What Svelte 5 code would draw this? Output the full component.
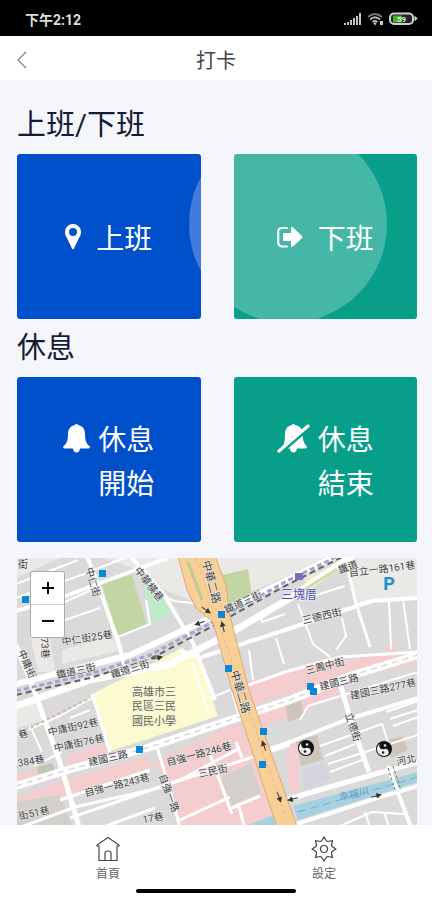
<script>
    let zoom = 16

    // blocks drawn below the roads
    let areas = [
        { kind: "pale", points: "16,558 60,558 16,578" },
        { kind: "pale", points: "102,558 178,558 190,600 165,590 140,570" },
        { kind: "pale", points: "215,558 330,558 250,592 228,600" },
        { kind: "pale", points: "345,558 418,558 418,598 375,602 355,604" },
        { kind: "pale", points: "62,650 110,636 122,650 62,664" },
        { kind: "pale", points: "30,635 50,635 55,672 38,672" },
        { kind: "pale", points: "16,702 34,697 44,720 16,728" },
        { kind: "cream", points: "304,578 332,566 334,572 308,590" },
        { kind: "park", points: "102,583 132,575 147,625 117,637" },
        { kind: "park", points: "222,575 248,569 252,596 228,603" },
        { kind: "mint", points: "142,580 164,597 170,615 153,623" },
        { kind: "school", points: "92,694 182,648 198,658 218,716 108,752" },
        { kind: "pink", points: "16,775 34,769 40,780 16,787" },
        { kind: "olive", points: "36,767 52,763 56,773 40,778" },
        { kind: "pink", points: "66,756 104,743 108,756 70,768" },
        { kind: "pink", points: "16,797 64,780 148,756 152,768 62,797 16,808" },
        { kind: "pink", points: "155,760 240,722 281,825 182,825" },
        { kind: "block", points: "221,778 251,763 261,793 231,805" },
        { kind: "block", points: "16,802 60,795 72,825 16,825" },
        { kind: "pink", points: "246,682 310,664 418,650 418,664 330,682 253,705" },
        { kind: "pink", points: "253,708 332,684 340,694 262,728" },
        { kind: "pink", points: "285,745 297,742 299,790 290,792" },
        { kind: "pink", points: "385,646 394,641 396,649 386,652" },
        { kind: "beige", points: "296,741 317,735 323,760 301,766" },
        { kind: "beige", points: "387,740 402,736 408,750 391,758" },
        { kind: "beige", points: "285,699 300,695 304,716 288,722" },
        { kind: "lilac", points: "302,771 325,763 330,780 304,790" },
        { kind: "river", points: "293,806 418,772 418,782 298,820" },
        { kind: "river", points: "248,825 280,813 286,825" }
    ]

    let streets = [
        { size: 2, d: "M16 598 L84 574 L220 520 M16 584 L78 560 M60 604 L98 587 M62 621 L100 608" },
        { size: 4, d: "M16 611 L60 598 L146 566 L168 558" },
        { size: 4, d: "M87 556 L100 590 L120 647 L125 668" },
        { size: 4, d: "M130 556 L163 593 L193 643 L215 700" },
        { size: 2, d: "M165 596 C175 605 190 600 200 605 M118 637 L150 624 L146 600" },
        { size: 5, d: "M16 645 L34 690 L60 763 L80 830" },
        { size: 7, d: "M16 706 L90 680 L170 664 L225 636 L292 597 L352 556" },
        { size: 6, d: "M16 684 L130 655 L210 618 L336 556" },
        { size: 2, d: "M16 735 L60 716 L92 698 M30 726 L42 752 M34 766 L62 752 M70 718 L90 710" },
        { size: 3, d: "M92 694 L110 752 M178 650 L202 658" },
        { size: 8, d: "M16 786 L64 771 L150 747 L290 700 L350 676 L418 655" },
        { size: 3, d: "M16 829 L75 807 L150 790 L290 745" },
        { size: 3, d: "M60 800 L150 770 M70 818 L180 780 L240 748 M90 832 L155 808 M180 820 L230 797" },
        { size: 3, d: "M157 747 L170 790 L180 828 M210 754 L232 814 M236 742 L242 758 M232 808 L260 796 M238 803 L244 825" },
        { size: 2, d: "M192 662 L208 712 M210 698 L230 690 M240 720 L232 692" },
        { size: 4, d: "M202 657 L285 630 L372 601 L418 598" },
        { size: 3, d: "M246 686 L285 672 L340 657 L418 652" },
        { size: 3, d: "M345 556 L355 600 L370 647" },
        { size: 2, d: "M298 604 L313 644 L330 657 M342 618 L346 636 L336 650 M389 600 L391 649 M403 600 L410 649" },
        { size: 2, d: "M249 650 L253 680 M276 638 L284 664 M300 600 L345 586 M260 612 L262 622 L285 614" },
        { size: 5, d: "M340 683 L352 725 L369 772" },
        { size: 4, d: "M262 752 L290 742 L348 719 L418 698" },
        { size: 2, d: "M320 746 L382 724 L390 748 M325 756 L355 744 M328 764 L418 735 M330 772 L362 760 M300 720 L308 706 L418 672" },
        { size: 2, d: "M386 712 L418 701 M390 719 L418 710 M393 726 L418 717" },
        { size: 5, d: "M285 800 L340 784 L418 762" },
        { size: 4, d: "M297 824 L380 797 L418 786" },
        { size: 4, d: "M388 766 L412 830" },
        { size: 2, d: "M340 826 L372 812 L404 814 M365 812 L371 830 M384 812 L390 830" }
    ]

    let labels = [
        { text: "街", x: 23, y: 564, turn: 0 },
        { text: "自立一路161巷", x: 382, y: 569, turn: -7 },
        { text: "鐵道三街", x: 243, y: 602, turn: -25 },
        { text: "鐵道", x: 348, y: 567, turn: -20 },
        { text: "三德西街", x: 322, y: 616, turn: -13 },
        { text: "三鳳中街", x: 325, y: 666, turn: -14 },
        { text: "建國三路", x: 339, y: 682, turn: -14 },
        { text: "建國三路277巷", x: 383, y: 689, turn: -12 },
        { text: "中仁街", x: 93, y: 582, turn: 74 },
        { text: "中仁街25巷", x: 87, y: 638, turn: -9 },
        { text: "73巷", x: 45, y: 648, turn: 86 },
        { text: "中庸街", x: 27, y: 664, turn: 66 },
        { text: "鐵道三街", x: 76, y: 671, turn: -12 },
        { text: "鐵道三街", x: 130, y: 669, turn: -17 },
        { text: "中華橫巷", x: 149, y: 584, turn: 52 },
        { text: "中華二路", x: 211, y: 582, turn: 75, big: true },
        { text: "中華二路", x: 240, y: 692, turn: 74, big: true },
        { text: "中庸街92巷", x: 73, y: 727, turn: -12 },
        { text: "中庸街76巷", x: 79, y: 743, turn: -12 },
        { text: "建國三路", x: 108, y: 758, turn: -13 },
        { text: "自強一路243巷", x: 117, y: 785, turn: -14 },
        { text: "自強一路246巷", x: 199, y: 754, turn: -15 },
        { text: "三民街", x: 213, y: 771, turn: -12 },
        { text: "自強一路", x: 169, y: 793, turn: 70 },
        { text: "384巷", x: 31, y: 761, turn: -10 },
        { text: "巷", x: 23, y: 734, turn: -10 },
        { text: "街51巷", x: 34, y: 813, turn: -12 },
        { text: "17巷", x: 153, y: 818, turn: -10 },
        { text: "立德街", x: 353, y: 727, turn: 72 },
        { text: "河北", x: 406, y: 760, turn: -12 },
        { text: "三塊厝", x: 299, y: 595, turn: 0, kind: "station" },
        { text: "幸福川", x: 354, y: 794, turn: -13, kind: "water" },
        { text: "高雄市三", x: 154, y: 692, turn: 0, kind: "campus" },
        { text: "民區三民", x: 154, y: 706, turn: 0, kind: "campus" },
        { text: "國民小學", x: 154, y: 721, turn: 0, kind: "campus" }
    ]

    let stops = [
        [102, 573], [25, 599], [221, 614], [228, 668], [310, 686],
        [313, 691], [139, 749], [263, 731], [262, 764]
    ]

    let temples = [[306, 748], [384, 749]]

    let arrows = [
        { x: 206, y: 610, turn: 35 },
        { x: 200, y: 623, turn: 160 },
        { x: 223, y: 627, turn: 255 },
        { x: 157, y: 658, turn: -12 },
        { x: 264, y: 746, turn: 250 },
        { x: 279, y: 797, turn: 70 },
        { x: 376, y: 796, turn: -14 },
        { x: 293, y: 799, turn: 165 }
    ]
</script>

<div class="page">
    <div class="status">
        <span>下午2:12</span>
        <svg width="74" height="14" viewBox="0 0 74 14" aria-hidden="true">
            <path d="M1 13v-2M4 13v-3M7 13V8M10 13V6M13 13V4M16 13V1" stroke="#c4c4c4" stroke-width="2" />
            <g fill="none" stroke="#bbb" stroke-width="1.7">
                <path d="M24 5Q31-1 38 5" stroke="#777" />
                <path d="M26 7.500Q31 3 36 7.500M28.500 10Q31 7.500 33.500 10" />
            </g>
            <path d="M29 10.500h4l-2 3zM36 9h3v4h-3z" fill="#ccc" />
            <rect x="46" y="1.500" width="23" height="10.500" rx="4" fill="#222" stroke="#d0d0d0" stroke-width="2" />
            <path d="M71 4.500l2 2-2 2z" fill="#ddd" stroke="#ddd" />
            <path d="M49 3.500h9v7h-9z" fill="#45b51f" />
            <text x="53" y="10" font-size="8" font-weight="700" fill="#dff2d4">59</text>
        </svg>
    </div>

    <header>
        <button class="back" aria-label="返回">
            <svg width="10" height="18" viewBox="0 0 10 18"><path d="M9 1L1 9l8 8" fill="none" stroke="#7d808c" stroke-width="1.200" /></svg>
        </button>
        <h1>打卡</h1>
    </header>

    <main>
        <h2>上班/下班</h2>
        <div class="cards">
            <button class="card blue">
                <span class="ripple edge"></span>
                <span class="inner wide">
                    <svg width="16" height="44" viewBox="0 0 16 44">
                        <path fill="#fff" fill-rule="evenodd" d="M8 9a8 8 0 0 1 8 8c0 3-1 4-2 6l-5 10.500q-1 2-2 0L2 23c-1-2-2-3-2-6a8 8 0 0 1 8-8zm0 4a4 4 0 1 0 0 8 4 4 0 0 0 0-8z" />
                    </svg>
                    <span>上班</span>
                </span>
            </button>
            <button class="card green">
                <span class="ripple middle"></span>
                <span class="inner wide">
                    <svg width="26" height="44" viewBox="0 0 26 44">
                        <path d="M10 13H5.500Q1.200 13 1.200 17v10q0 4.500 4.300 4.500H10" fill="none" stroke="#fff" stroke-width="2.200" stroke-linecap="round" />
                        <path d="M7 18h7v-5q0-2 2-.5l9 8.500q1 1 0 2l-9 8.500q-2 1-2-.5v-5H7q-1 0-1-1v-6q0-1 1-1z" fill="#fff" />
                    </svg>
                    <span>下班</span>
                </span>
            </button>
        </div>

        <h2>休息</h2>
        <div class="cards">
            <button class="card blue">
                <span class="inner">
                    <svg width="27" height="44" viewBox="0 0 27 44">
                        <path d="M12 9q1.500-2.500 3 0c5 1 7 4.500 7 9 0 7 1.500 10 5 12.500 0 1.500-1 2-2 2h-8q-.5 4-3.500 4t-3.500-4H2q-2 0-2-2C3.500 28 5 25 5 18c0-4.500 2-8 7-9z" fill="#fff" />
                    </svg>
                    <span>休息<br />開始</span>
                </span>
            </button>
            <button class="card green">
                <span class="inner">
                    <svg width="33" height="44" viewBox="0 0 33 44">
                        <path d="M15 9q1.500-2.500 3 0c4 .8 6 3 7 5L6 30q2-4 2-12c0-4.500 2-8 7-9z" fill="#fff" />
                        <path d="M25.500 19q.5 8.500 4.500 11.500 0 2-2 2h-8q-.5 4-3.500 4t-3.500-4h-3z" fill="#fff" />
                        <path d="M2 35L31 10" stroke="#fff" stroke-width="3.200" stroke-linecap="round" />
                        <path d="M6 35.500L32 13" stroke="#079f8a" stroke-width="2" />
                    </svg>
                    <span>休息<br />結束</span>
                </span>
            </button>
        </div>

        <div class="map" data-zoom={zoom}>
            <svg class="tiles" viewBox="17 558 400 267" preserveAspectRatio="xMidYMid slice" role="img" aria-label="地圖">
                <rect x="0" y="540" width="440" height="300" fill="#dadada" />
                {#each areas as area}
                    <polygon class={area.kind} points={area.points} />
                {/each}
                {#each streets as street}
                    <path class="street" d={street.d} stroke-width={street.size} />
                {/each}

                <path d="M20 733L90 698" stroke="#d8b69c" stroke-width="2" stroke-dasharray="3 3" />
                <path d="M16 691L37 686 90 674 150 655 213 622 285 582 338 556" fill="none" stroke="#a6a3cf" stroke-width="3" stroke-dasharray="5 3" />
                <path d="M16 695L37 690 90 678 150 659 213 626 285 586 344 556" fill="none" stroke="#62605f" stroke-width="2" stroke-dasharray="6 4" />
                <path d="M304 590L337 569" stroke="#d3dc9f" stroke-width="3" />
                <path d="M16 786L64 771 150 747 290 700 350 676 418 655" fill="none" stroke="#c9c4c4" stroke-dasharray="6 5" />

                <polygon points="178,556 215,556 226,585 229,612 249,690 297,827 277,827 232,690 213,622 196,608 187,590" fill="#f8cf97" stroke="#dcaa79" />
                <path d="M188 562L202 600" stroke="#bacb91" stroke-width="3" />
                <path d="M196 558L212 604M222 632L286 820" stroke="#eab488" stroke-dasharray="3 4" />
                <path d="M298 812L418 777" stroke="#7eabc0" stroke-dasharray="8 5" />
                <path d="M388 768L396 792M393 766L401 790" stroke="#767676" stroke-dasharray="3 2" />

                {#each arrows as arrow}
                    <path d="M-5 0H2M1-2L5 0 1 2z" fill="#333" stroke="#333" transform="translate({arrow.x} {arrow.y}) rotate({arrow.turn})" />
                {/each}
                {#each stops as [x, y]}
                    <rect x={x - 3} y={y - 3} width="7" height="7" fill="#0b87d3" />
                {/each}
                {#each temples as [x, y]}
                    <g transform="translate({x} {y})">
                        <circle r="8" fill="#111" />
                        <path d="M0-7a7 7 0 0 0 0 14 3.500 3.500 0 0 0 0-7 3.500 3.500 0 0 1 0-7z" fill="#eee" transform="rotate(-20)" />
                        <circle cx="-1" cy="3.500" r="1.300" fill="#111" />
                        <circle cx="1" cy="-3.500" r="1.300" fill="#eee" />
                    </g>
                {/each}
                <rect x="295" y="573" width="8" height="7" fill="#7370c4" />
                {#each labels as label}
                    <text class="label {label.kind || ''}" class:big={label.big} transform="translate({label.x} {label.y}) rotate({label.turn})">{label.text}</text>
                {/each}
                <text class="parking" x="389" y="590">P</text>
            </svg>

            <div class="zoom">
                <button aria-label="放大" on:click={() => zoom += 1}>
                    <svg width="12" height="12" viewBox="0 0 12 12"><path d="M0 6h12M6 0v12" stroke="#000" stroke-width="2" /></svg>
                </button>
                <button aria-label="縮小" on:click={() => zoom -= 1}>
                    <svg width="12" height="12" viewBox="0 0 12 12"><path d="M0 6h12" stroke="#000" stroke-width="2" /></svg>
                </button>
            </div>
        </div>
    </main>

    <nav>
        <a href="#home">
            <svg width="24" height="26" viewBox="0 0 24 26" fill="none" stroke="#444" stroke-width="1.200">
                <path d="M1 10V9L12 1.500 23 9v1h-2v14.500H3V10zM9 24v-7q0-2 3-2t3 2v7" />
            </svg>
            <span>首頁</span>
        </a>
        <a href="#settings">
            <svg width="26" height="26" viewBox="-13 -13 26 26" fill="none" stroke="#444" stroke-width="1.200" stroke-linejoin="round">
                <path d="M-2.500-8L0-12 2.500-8 4-7.500 8.500-8.500 7.500-4 8-2.500 12 0 8 2.500 7.500 4 8.500 8.500 4 7.500 2.500 8 0 12-2.500 8-4 7.500-8.500 8.500-7.500 4-8 2.500-12 0-8-2.500-7.500-4-8.500-8.500-4-7.500z" />
                <circle r="3.500" />
            </svg>
            <span>設定</span>
        </a>
        <div class="indicator"></div>
    </nav>
</div>

<style>
    :global(body) {
        margin: 0;
        background: #f5f6fb;
    }

    .page {
        display: flex;
        flex-direction: column;
        min-height: 100vh;
        font-family: Roboto, "Noto Sans CJK TC", sans-serif;
        color: #141b35;
    }

    button {
        padding: 0;
        border: 0;
        font: inherit;
        cursor: pointer;
    }

    .status {
        display: flex;
        align-items: center;
        justify-content: space-between;
        box-sizing: border-box;
        height: 36px;
        padding: 2px 14px 0 25px;
        background: #000;
        color: #ddd;
        font-size: 14px;
        font-weight: 700;
    }

    header {
        display: grid;
        grid-template-columns: 44px 1fr 44px;
        align-items: center;
        box-sizing: border-box;
        height: 44px;
        padding-top: 4px;
        background: #fff;
        font-family: "Noto Sans CJK TC", sans-serif;
    }

    .back {
        display: flex;
        align-items: center;
        justify-content: center;
        height: 40px;
        background: none;
    }

    h1 {
        margin: 0;
        color: #444;
        font-size: 20px;
        font-weight: 400;
        line-height: 28px;
        text-align: center;
    }

    main {
        display: flex;
        flex: 1;
        flex-direction: column;
        padding: 16px 15px 0 17px;
    }

    h2 {
        margin: 0;
        font-size: 29px;
        font-weight: 400;
        line-height: 58px;
    }

    .cards {
        display: grid;
        grid-template-columns: 1fr 1fr;
        gap: 33px;
    }

    .card {
        position: relative;
        display: flex;
        align-items: center;
        justify-content: center;
        height: 165px;
        overflow: hidden;
        border-radius: 3px;
        color: #fff;
        font-family: "Noto Sans CJK TC", sans-serif;
        font-size: 28px;
        line-height: 44px;
    }

    .blue {
        background: #0050cc;
    }

    .green {
        background: #079f8a;
    }

    .inner {
        position: relative;
        display: flex;
        align-items: flex-start;
        gap: 8px;
    }

    .wide {
        gap: 15px;
    }

    .ripple {
        position: absolute;
        top: -29px;
        width: 198px;
        height: 198px;
        border-radius: 50%;
        background: rgba(255, 255, 255, 0.25);
    }

    .edge {
        left: 94%;
    }

    .middle {
        left: -24%;
    }

    .map {
        position: relative;
        flex: 1;
        min-height: 267px;
        margin-top: 16px;
        overflow: hidden;
    }

    .tiles {
        position: absolute;
        width: 100%;
        height: 100%;
    }

    .street {
        fill: none;
        stroke: #fff;
        stroke-linejoin: round;
    }

    .pale {
        fill: #ebe9e6;
    }

    .cream {
        fill: #eeedd3;
    }

    .park {
        fill: #c3d5a2;
    }

    .mint {
        fill: #bdebc7;
    }

    .school {
        fill: #fbfad0;
    }

    .pink {
        fill: #f4cdcf;
    }

    .block {
        fill: #d3cfcb;
    }

    .olive {
        fill: #c3c6b0;
    }

    .beige {
        fill: #cfc5bb;
    }

    .lilac {
        fill: #d4d3e0;
    }

    .river {
        fill: #a5d1e2;
    }

    .label {
        fill: #3c3c3c;
        stroke: #f5f5f5;
        stroke-width: 1px;
        paint-order: stroke;
        font-size: 10px;
        text-anchor: middle;
        dominant-baseline: central;
    }

    .big {
        font-size: 11px;
    }

    .station {
        fill: #5350b5;
        font-size: 12px;
    }

    .water {
        fill: #6a9bc4;
        stroke: none;
    }

    .campus {
        fill: #68673b;
        font-size: 11px;
    }

    .parking {
        fill: #1d8fd6;
        font-size: 18px;
        font-weight: 700;
        text-anchor: middle;
    }

    .zoom {
        position: absolute;
        top: 13px;
        left: 13px;
        display: flex;
        flex-direction: column;
        width: 33px;
        border: 1px solid #aaa;
        border-radius: 3px;
        background: #ccc;
        gap: 1px;
        overflow: hidden;
    }

    .zoom button {
        display: flex;
        align-items: center;
        justify-content: center;
        height: 32px;
        background: #fff;
    }

    nav {
        position: relative;
        display: grid;
        grid-template-columns: 1fr 1fr;
        height: 75px;
        background: #fff;
    }

    nav a {
        display: flex;
        flex-direction: column;
        align-items: center;
        padding-top: 11px;
        color: #666;
        font-size: 12px;
        line-height: 24px;
        text-decoration: none;
    }

    .indicator {
        position: absolute;
        bottom: 7px;
        left: 50%;
        width: 160px;
        height: 4px;
        border-radius: 2px;
        background: #000;
        transform: translateX(-50%);
    }
</style>
